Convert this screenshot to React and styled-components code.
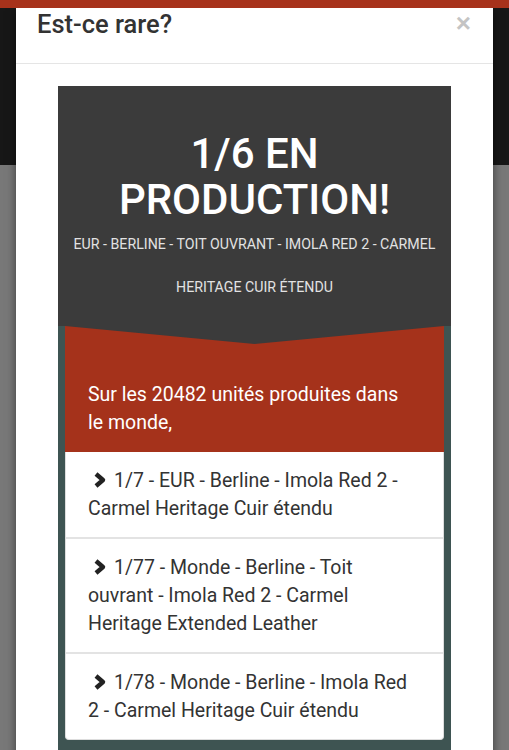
import React from "react";
import styled, { createGlobalStyle } from "styled-components";

const GlobalStyle = createGlobalStyle`
  html, body {
    margin: 0;
    padding: 0;
  }
  body {
    font-family: Roboto, "Noto Sans", "Liberation Sans", sans-serif;
    background: linear-gradient(#171717 0 165px, #787878 165px);
    -webkit-font-smoothing: antialiased;
  }
`;

const TopBar = styled.div`
  position: fixed;
  top: 0;
  left: 0;
  right: 0;
  height: 8px;
  background-color: #a7321b;
  z-index: 10;
`;

const Page = styled.div`
  padding: 8px 16px 0;
  min-height: 742px;
`;

const Modal = styled.div`
  background-color: #ffffff;
  box-shadow: 0 3px 9px rgba(0, 0, 0, 0.5);
`;

const ModalHeader = styled.div`
  display: flex;
  align-items: flex-start;
  justify-content: space-between;
  box-sizing: border-box;
  height: 56px;
  padding: 2px 22px 0 21px;
  border-bottom: 1px solid #e5e5e5;
`;

const ModalTitle = styled.h4`
  margin: 0;
  font-size: 25.5px;
  line-height: 28px;
  font-weight: 500;
  color: #333333;
`;

const Close = styled.button`
  border: 0;
  background: none;
  padding: 0;
  font-family: "Liberation Sans", Arial, sans-serif;
  font-size: 26px;
  line-height: 26px;
  font-weight: bold;
  color: #c4c4c4;
  cursor: pointer;
`;

const ModalBody = styled.div`
  padding: 22px 42px 20px;
`;

const Card = styled.div`
  background-color: #3e5452;
  padding-bottom: 20px;
`;

const Hero = styled.div`
  position: relative;
  background-color: #3b3b3b;
  padding: 45px 12px 17px;
  text-align: center;

  &::after {
    content: "";
    position: absolute;
    top: 100%;
    left: 7px;
    right: 7px;
    height: 18px;
    background-color: #3b3b3b;
    clip-path: polygon(0 0, 100% 0, 50% 100%);
    z-index: 1;
  }
`;

const HeroTitle = styled.h1`
  margin: 0;
  font-size: 42px;
  line-height: 46px;
  font-weight: 500;
  color: #ffffff;
`;

const HeroSub = styled.p`
  margin: 0;
  font-size: 14.2px;
  line-height: 43px;
  color: #e2e2e2;
  text-transform: uppercase;
`;

const Ribbon = styled.div`
  margin: 0 7px;
  background-color: #a5321b;
  padding: 55px 40px 15px 23px;
  font-size: 19.5px;
  line-height: 28px;
  color: #ffffff;
`;

const List = styled.ul`
  list-style: none;
  margin: 0 7px;
  padding: 0;
  background-color: #ffffff;
  border: 1px solid #dddddd;
  border-top: 0;
  border-radius: 0 0 4px 4px;
`;

const Item = styled.li`
  padding: 15px 22px 14px;
  font-size: 19.5px;
  line-height: 28px;
  color: #333333;
  border-top: ${(p) => (p.first ? "0" : "2px solid #e3e3e3")};
`;

const ChevronSvg = styled.svg`
  width: 15px;
  height: 16px;
  margin: 0 7px 0 4px;
  vertical-align: -1px;
`;

const Chevron = () => (
  <ChevronSvg viewBox="0 0 15 16">
    <polyline
      points="4,2 11,8 4,14"
      fill="none"
      stroke="#222222"
      strokeWidth="4.4"
      strokeLinejoin="round"
      strokeLinecap="butt"
    />
  </ChevronSvg>
);

const items = [
  "1/7 - EUR - Berline - Imola Red 2 - Carmel Heritage Cuir étendu",
  "1/77 - Monde - Berline - Toit ouvrant - Imola Red 2 - Carmel Heritage Extended Leather",
  "1/78 - Monde - Berline - Imola Red 2 - Carmel Heritage Cuir étendu",
];

export default function App() {
  return (
    <>
      <GlobalStyle />
      <TopBar />
      <Page>
        <Modal>
          <ModalHeader>
            <ModalTitle>Est-ce rare?</ModalTitle>
            <Close aria-label="Fermer">×</Close>
          </ModalHeader>
          <ModalBody>
            <Card>
              <Hero>
                <HeroTitle>1/6 EN PRODUCTION!</HeroTitle>
                <HeroSub>
                  EUR - Berline - Toit ouvrant - Imola Red 2 - Carmel Heritage
                  Cuir étendu
                </HeroSub>
              </Hero>
              <Ribbon>Sur les 20482 unités produites dans le monde,</Ribbon>
              <List>
                {items.map((text, i) => (
                  <Item key={i} first={i === 0}>
                    <Chevron />
                    {text}
                  </Item>
                ))}
              </List>
            </Card>
          </ModalBody>
        </Modal>
      </Page>
    </>
  );
}
